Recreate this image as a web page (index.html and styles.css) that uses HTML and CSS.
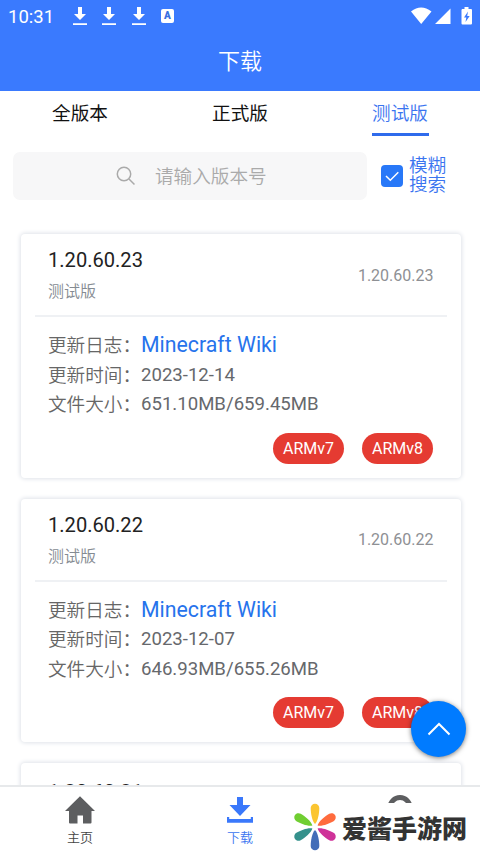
FILE: index.html
```
<!DOCTYPE html>
<html lang="zh-CN">
<head>
<meta charset="utf-8">
<title>下载</title>
<link rel="stylesheet" href="styles.css">
</head>
<body>
<div class="app">
  <header class="header">
    <div class="status">
      <span class="clock">10:31</span>
      <svg class="dl" viewBox="0 0 14 19"><path d="M5 0h4v7h4l-6 6-6-6h4zM0 16.2h14v1.8H0z"/></svg>
      <svg class="dl" viewBox="0 0 14 19"><path d="M5 0h4v7h4l-6 6-6-6h4zM0 16.2h14v1.8H0z"/></svg>
      <svg class="dl" viewBox="0 0 14 19"><path d="M5 0h4v7h4l-6 6-6-6h4zM0 16.2h14v1.8H0z"/></svg>
      <span class="abadge">A</span>
      <svg class="signals" viewBox="0 0 62 18"><path d="M1 4.5Q11-3.5 21.500 4.500L11.200 17zM25 17 40.500 1.500V17zM52 2h2.500V0h4v2H61q1 0 1 1v13.500q0 1-1 1h-8.500q-1 0-1-1V3z"/><path class="bolt" d="M58 4.500 54 10.500h2.300L55.500 15l4.200-6h-2.500z"/></svg>
    </div>
    <h1 class="title">下载</h1>
  </header>
  <nav class="tabs">
    <span class="tab">全版本</span>
    <span class="tab">正式版</span>
    <span class="tab tab-on">测试版</span>
  </nav>
  <div class="search">
    <div class="field">
      <svg class="glass" viewBox="0 0 20 20"><circle cx="8" cy="8" r="6.700"/><path d="m13 13 5.500 5.500"/></svg>
      <span>请输入版本号</span>
    </div>
    <span class="check"><svg viewBox="0 0 22 22"><path d="m5 11 4.300 4.300 8-8"/></svg></span>
    <span class="fuzzy">模糊<br>搜索</span>
  </div>
  <main class="list">
    <article class="card">
      <div class="card-head">
        <div><div class="ver">1.20.60.23</div><div class="kind">测试版</div></div>
        <span class="side">1.20.60.23</span>
      </div>
      <div class="info">
        <div class="row"><span>更新日志：</span><a class="link">Minecraft Wiki</a></div>
        <div class="row"><span>更新时间：</span><span>2023-12-14</span></div>
        <div class="row"><span>文件大小：</span><span>651.10MB/659.45MB</span></div>
      </div>
      <div class="pills"><span class="pill">ARMv7</span><span class="pill">ARMv8</span></div>
    </article>
    <article class="card">
      <div class="card-head">
        <div><div class="ver">1.20.60.22</div><div class="kind">测试版</div></div>
        <span class="side">1.20.60.22</span>
      </div>
      <div class="info">
        <div class="row"><span>更新日志：</span><a class="link">Minecraft Wiki</a></div>
        <div class="row"><span>更新时间：</span><span>2023-12-07</span></div>
        <div class="row"><span>文件大小：</span><span>646.93MB/655.26MB</span></div>
      </div>
      <div class="pills"><span class="pill">ARMv7</span><span class="pill">ARMv8</span></div>
    </article>
    <article class="card">
      <div class="card-head card-head-cut">
        <div class="ver">1.20.60.21</div>
      </div>
    </article>
  </main>
  <footer class="bar">
    <div class="item">
      <svg class="ico" viewBox="0 0 30 30"><path d="M15 1.200 30 16h-3.500v11.500q0 1-1 1H18v-8h-5.500v8H5q-1 0-1-1V16H0z"/></svg>
      <span>主页</span>
    </div>
    <div class="item item-on">
      <svg class="ico" viewBox="0 0 30 30"><path d="M12 2h6v8h7.500L15 21 4.500 10H12zM2 22h2.200v2h21.600v-2H28v5.800H2z"/></svg>
      <span>下载</span>
    </div>
    <div class="item">
      <svg class="ico" viewBox="0 0 30 30"><circle class="head" cx="15" cy="12.500" r="10"/></svg>
    </div>
  </footer>
  <button class="top" aria-label="回到顶部"><svg viewBox="0 0 24 14"><path d="M1.500 12.500 12 2l10.500 10.500"/></svg></button>
  <div class="mark">
    <svg class="flower" viewBox="-23 -25 46 50">
      <path fill="#fbc531" d="M0-3C-3-6-4.300-14-4.300-19a4.300 4.300 0 0 1 8.600 0C4.300-14 3-6 0-3z"/>
      <path fill="#ff6b3d" transform="rotate(60)" d="M0-3C-3-6-4.300-14-4.300-19a4.300 4.300 0 0 1 8.600 0C4.300-14 3-6 0-3z"/>
      <path fill="#cf3299" transform="rotate(120)" d="M0-3C-3-6-4.300-14-4.300-19a4.300 4.300 0 0 1 8.600 0C4.300-14 3-6 0-3z"/>
      <path fill="#426db8" transform="rotate(180)" d="M0-3C-3-6-4.300-14-4.300-19a4.300 4.300 0 0 1 8.600 0C4.300-14 3-6 0-3z"/>
      <path fill="#35918c" transform="rotate(240)" d="M0-3C-3-6-4.300-14-4.300-19a4.300 4.300 0 0 1 8.600 0C4.300-14 3-6 0-3z"/>
      <path fill="#70ce32" transform="rotate(300)" d="M0-3C-3-6-4.300-14-4.300-19a4.300 4.300 0 0 1 8.600 0C4.300-14 3-6 0-3z"/>
    </svg>
    <span class="mark-name">爱酱手游网</span>
  </div>
</div>
</body>
</html>
```
FILE: styles.css
```
* { box-sizing: border-box; }
body { margin: 0; background: #fff; font-family: Roboto, "Noto Sans CJK SC", sans-serif; font-weight: 350; }
.app { position: relative; width: 480px; height: 853px; overflow: hidden; display: flex; flex-direction: column; }
.header { height: 91px; flex: none; background: #3a7afe; color: #fff; }
.status { height: 32px; display: flex; align-items: center; padding: 0 8px 0 8px; }
.clock { font-size: 18.500px; font-weight: 400; width: 65px; line-height: 32px; padding-top: 1px; }
.dl { width: 14px; height: 19px; margin-right: 15.300px; fill: #fff; }
.abadge { width: 13px; height: 14px; border-radius: 2px; background: #fff; color: #3a6fe0; font-size: 10px; line-height: 14px; font-weight: 900; text-align: center; }
.signals { width: 62px; height: 18px; margin-left: auto; fill: #fff; }
.signals .bolt { fill: #3a7afe; }
.title { margin: 0; font-size: 22px; line-height: 60px; font-weight: 350; text-align: center; }
.tabs { display: flex; height: 61px; flex: none; }
.tab { width: 160.500px; text-align: center; font-size: 18.600px; line-height: 47px; color: #111; font-weight: 400; }
.tab-on { color: #3a74f0; font-weight: 350; display: flex; flex-direction: column; align-items: center; }
.tab-on::after { content: ""; width: 57px; height: 3px; margin-top: -5px; background: #2f6bec; }
.search { height: 48px; flex: none; display: flex; align-items: center; padding-left: 13px; }
.field { width: 354px; height: 48px; border-radius: 7px; background: #f7f7f8; display: flex; align-items: center; padding-left: 103px; color: #aaa; font-size: 18.600px; line-height: 48px; }
.field span { padding-top: 2px; }
.glass { width: 20px; height: 20px; margin-right: 19px; fill: none; stroke: #aaa; stroke-width: 1.500; }
.check { width: 22px; height: 22px; margin: 0 6px 0 14px; border-radius: 4px; background: #2878f8; }
.check svg { display: block; fill: none; stroke: #fff; stroke-width: 1.500; }
.fuzzy { color: #3a74f0; font-size: 18.600px; line-height: 19px; }
.list { flex: 1; min-height: 0; overflow: hidden; padding: 34px 19px 0 21px; }
.card { height: 243.500px; margin-bottom: 21.200px; border-radius: 4px; background: #fff; box-shadow: 0 0 4px 1px #dfe3e9; padding: 0 14px; }
.card-head { height: 83px; display: flex; justify-content: space-between; align-items: center; padding: 0 13.500px 0 13px; border-bottom: 2px solid #eff1f4; }
.card-head-cut { align-items: flex-start; padding-top: 14px; }
.ver { font-size: 20.100px; line-height: 30px; color: #222; font-weight: 400; }
.kind { font-size: 16px; line-height: 24px; color: #858b92; margin-top: 5px; }
.side { font-size: 16px; color: #8e9094; font-weight: 400; padding-top: 1px; }
.info { padding: 14px 13px 0; font-size: 18.600px; color: #666; }
.row { display: flex; height: 29.600px; line-height: 29.600px; }
.row span:first-child { padding-top: 1px; }
.row span + span { font-weight: 400; color: #66686c; }
.link { font-size: 21.300px; line-height: 28px; font-weight: 400; color: #2673ec; }
.pills { display: flex; justify-content: flex-end; gap: 18px; padding: 13px 14px 0 0; }
.pill { width: 71px; height: 31px; border-radius: 16px; background: #e53b32; color: #fff; font-size: 16px; font-weight: 400; line-height: 31px; text-align: center; }
.bar { height: 68px; flex: none; display: flex; border-top: 2px solid #e7e9eb; background: #fff; }
.item { flex: 1; display: flex; flex-direction: column; align-items: center; font-size: 13px; line-height: 18px; color: #444; padding-top: 8px; }
.item-on { color: #3a74f0; }
.ico { width: 30px; height: 30px; margin-bottom: 4px; fill: #5d5e60; }
.item-on .ico { fill: #3a78fb; }
.ico .head { fill: none; stroke: #5d5e60; stroke-width: 5; }
.top { position: absolute; left: 411px; top: 701px; width: 55px; height: 56px; border: 0; padding: 0; border-radius: 50%; background: #007bff; box-shadow: 0 1px 5px #0008; display: flex; align-items: center; justify-content: center; }
.top svg { width: 24px; height: 14px; fill: none; stroke: #fff; stroke-width: 2; }
.mark { position: absolute; left: 290px; top: 803px; width: 190px; height: 50px; background: #fff; display: flex; align-items: center; padding-left: 2px; }
.flower { width: 46px; height: 50px; flex: none; margin-top: -2px; }
.mark-name { font-size: 25px; line-height: 50px; font-weight: 900; color: #333; margin: 4px 0 0 4px; white-space: nowrap; }
```
